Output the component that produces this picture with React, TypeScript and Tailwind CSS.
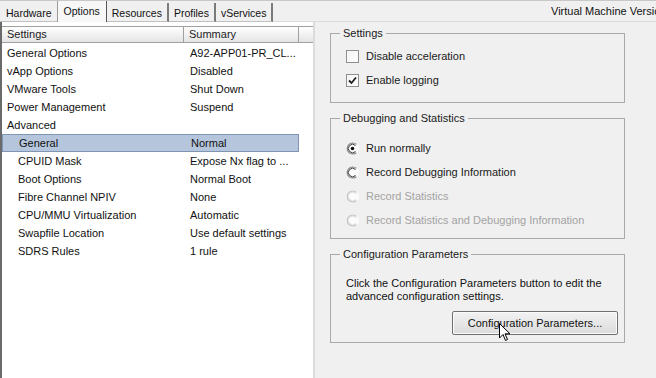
import React from "react";

const TABS = ["Hardware", "Options", "Resources", "Profiles", "vServices"];

const ROWS = [
  { name: "General Options", summary: "A92-APP01-PR_CL...", indent: false },
  { name: "vApp Options", summary: "Disabled", indent: false },
  { name: "VMware Tools", summary: "Shut Down", indent: false },
  { name: "Power Management", summary: "Suspend", indent: false },
  { name: "Advanced", summary: "", indent: false },
  { name: "General", summary: "Normal", indent: true, selected: true },
  { name: "CPUID Mask", summary: "Expose Nx flag to ...", indent: true },
  { name: "Boot Options", summary: "Normal Boot", indent: true },
  { name: "Fibre Channel NPIV", summary: "None", indent: true },
  { name: "CPU/MMU Virtualization", summary: "Automatic", indent: true },
  { name: "Swapfile Location", summary: "Use default settings", indent: true },
  { name: "SDRS Rules", summary: "1 rule", indent: true },
];

function Checkbox({ checked, label }: { checked?: boolean; label: string }) {
  return (
    <div className="flex items-center h-4">
      <div className="w-[13px] h-[13px] border border-[#8e8f8f] bg-gradient-to-br from-[#f4f4f4] to-white flex items-center justify-center">
        {checked && (
          <svg width="9" height="9" viewBox="0 0 9 9">
            <path d="M1 4.5 L3.5 7 L8 1.5" stroke="#1f1f1f" strokeWidth="1.8" fill="none" />
          </svg>
        )}
      </div>
      <span className="ml-[7px] text-[#1a1a1a]">{label}</span>
    </div>
  );
}

function Radio({ checked, disabled, label }: { checked?: boolean; disabled?: boolean; label: string }) {
  return (
    <div className="flex items-center h-4">
      <svg width="13" height="13" viewBox="0 0 13 13">
        <path d="M10.5 2.5 A5.5 5.5 0 1 0 10.5 10.5" stroke={disabled ? "#c4c4c4" : "#8a8a8a"} strokeWidth="1.2" fill="none" />
        <path d="M10.5 10.5 A5.5 5.5 0 0 0 10.5 2.5" stroke="#ffffff" strokeWidth="1.2" fill="none" />
        <circle cx="6.5" cy="6.5" r="4.4" fill="#fcfcfc" />
        <path d="M9.5 3.5 A4.2 4.2 0 1 0 9.5 9.5" stroke={disabled ? "#dcdcdc" : "#3c3c3c"} strokeWidth="1" fill="none" />
        {checked && <circle cx="6.5" cy="6.5" r="1.8" fill="#111" />}
      </svg>
      <span className={`ml-[7px] ${disabled ? "text-[#a3a3a3]" : "text-[#1a1a1a]"}`}>{label}</span>
    </div>
  );
}

function Group({ title, h, children }: { title: string; h: string; children: React.ReactNode }) {
  return (
    <fieldset className={`border border-[#a9a9a9] ${h} w-[295px] px-[15px]`}>
      <legend className="ml-[-6px] px-[3px] leading-[13px] text-[#1a1a1a]">{title}</legend>
      {children}
    </fieldset>
  );
}

export default function App() {
  return (
    <div
      className="w-[656px] h-[378px] overflow-hidden bg-[#f0f0f0] flex flex-col text-[11px] relative whitespace-nowrap"
      style={{ fontFamily: '"Liberation Sans", Arial, sans-serif' }}
    >
      {/* tab strip */}
      <div className="h-[22px] flex items-end bg-[#f0f0f0] border-t border-[#c8c8c8] text-[10.5px]">
        {TABS.map((t, i) =>
          i === 1 ? (
            <div
              key={t}
              className="h-[21px] px-[6px] pt-[3px] bg-[#f7f7f7] border-l border-r border-[#9a9a9a] border-r-[#555] text-[#111]"
            >
              {t}
            </div>
          ) : (
            <div
              key={t}
              className={`h-[19px] pt-[3px] text-[#111] border-b border-[#c0c0c0] ${
                i === 0 ? "pl-[6px] pr-[5px]" : "px-[5px]"
              } ${i > 1 ? "border-r-2 border-r-[#7a7a7a]" : ""}`}
            >
              {t}
            </div>
          )
        )}
        <div className="flex-1 h-full flex items-center justify-end border-b border-[#dcdcdc]">
          <span className="w-[105px] overflow-hidden text-[11px] text-[#111]">Virtual Machine Version: 8</span>
        </div>
      </div>

      <div className="flex flex-1">
        {/* settings list */}
        <div className="w-[315px] bg-white border-l-2 border-[#6a6a6a] border-r-2 border-r-[#dcdcdc] pt-[4px]">
          <div className="flex h-[17px] border-t border-b border-[#a0a0a0] bg-gradient-to-b from-white to-[#e4e4e4] text-[#222]">
            <div className="w-[182px] pl-[5px] leading-[15px] border-r border-[#a0a0a0]">Settings</div>
            <div className="w-[115px] pl-[5px] leading-[15px] border-r border-[#a0a0a0]">Summary</div>
            <div className="flex-1" />
          </div>
          <div className="flex flex-col pt-[1px] text-[#111]">
            {ROWS.map((r) => (
              <div
                key={r.name}
                className={`flex h-[18px] items-center w-[297px] ${
                  r.selected ? "bg-[#b5c5dc] border border-[#8094b4]" : ""
                }`}
              >
                <div className={`w-[183px] ${r.indent ? "pl-[16px]" : "pl-[5px]"}`}>{r.name}</div>
                <div className="pl-[5px]">{r.summary}</div>
              </div>
            ))}
          </div>
        </div>

        {/* right pane */}
        <div className="flex-1 pl-[15px] pt-[5px] flex flex-col gap-[9px]">
          <Group title="Settings" h="h-[76px]">
            <div className="flex flex-col gap-[8px] pt-[8px]">
              <Checkbox label="Disable acceleration" />
              <Checkbox checked label="Enable logging" />
            </div>
          </Group>
          <Group title="Debugging and Statistics" h="h-[127px]">
            <div className="flex flex-col gap-[8px] pt-[15px]">
              <Radio checked label="Run normally" />
              <Radio label="Record Debugging Information" />
              <Radio disabled label="Record Statistics" />
              <Radio disabled label="Record Statistics and Debugging Information" />
            </div>
          </Group>
          <Group title="Configuration Parameters" h="h-[95px]">
            <div className="flex flex-col pt-[16px]">
              <p className="leading-[13px] text-[#111]">
                Click the Configuration Parameters button to edit the
                <br />
                advanced configuration settings.
              </p>
              <div className="flex justify-end mt-[8px] mr-[-9px]">
                <button className="w-[166px] h-[24px] border border-[#707070] rounded-[2px] bg-gradient-to-b from-[#f2f2f2] to-[#dcdcdc] text-[#111] text-[11px] shadow-[inset_0_0_0_1px_#fbfbfb]">
                  Configuration Parameters...
                </button>
              </div>
            </div>
          </Group>
        </div>
      </div>

      {/* mouse pointer */}
      <svg className="absolute left-[499px] top-[323px]" width="12" height="19" viewBox="0 0 12 19">
        <path d="M0.5 0.5 L0.5 15 L4 11.5 L6.5 17.5 L8.5 16.5 L6 10.8 L11 10.8 Z" fill="white" stroke="black" strokeWidth="1" />
      </svg>
    </div>
  );
}
